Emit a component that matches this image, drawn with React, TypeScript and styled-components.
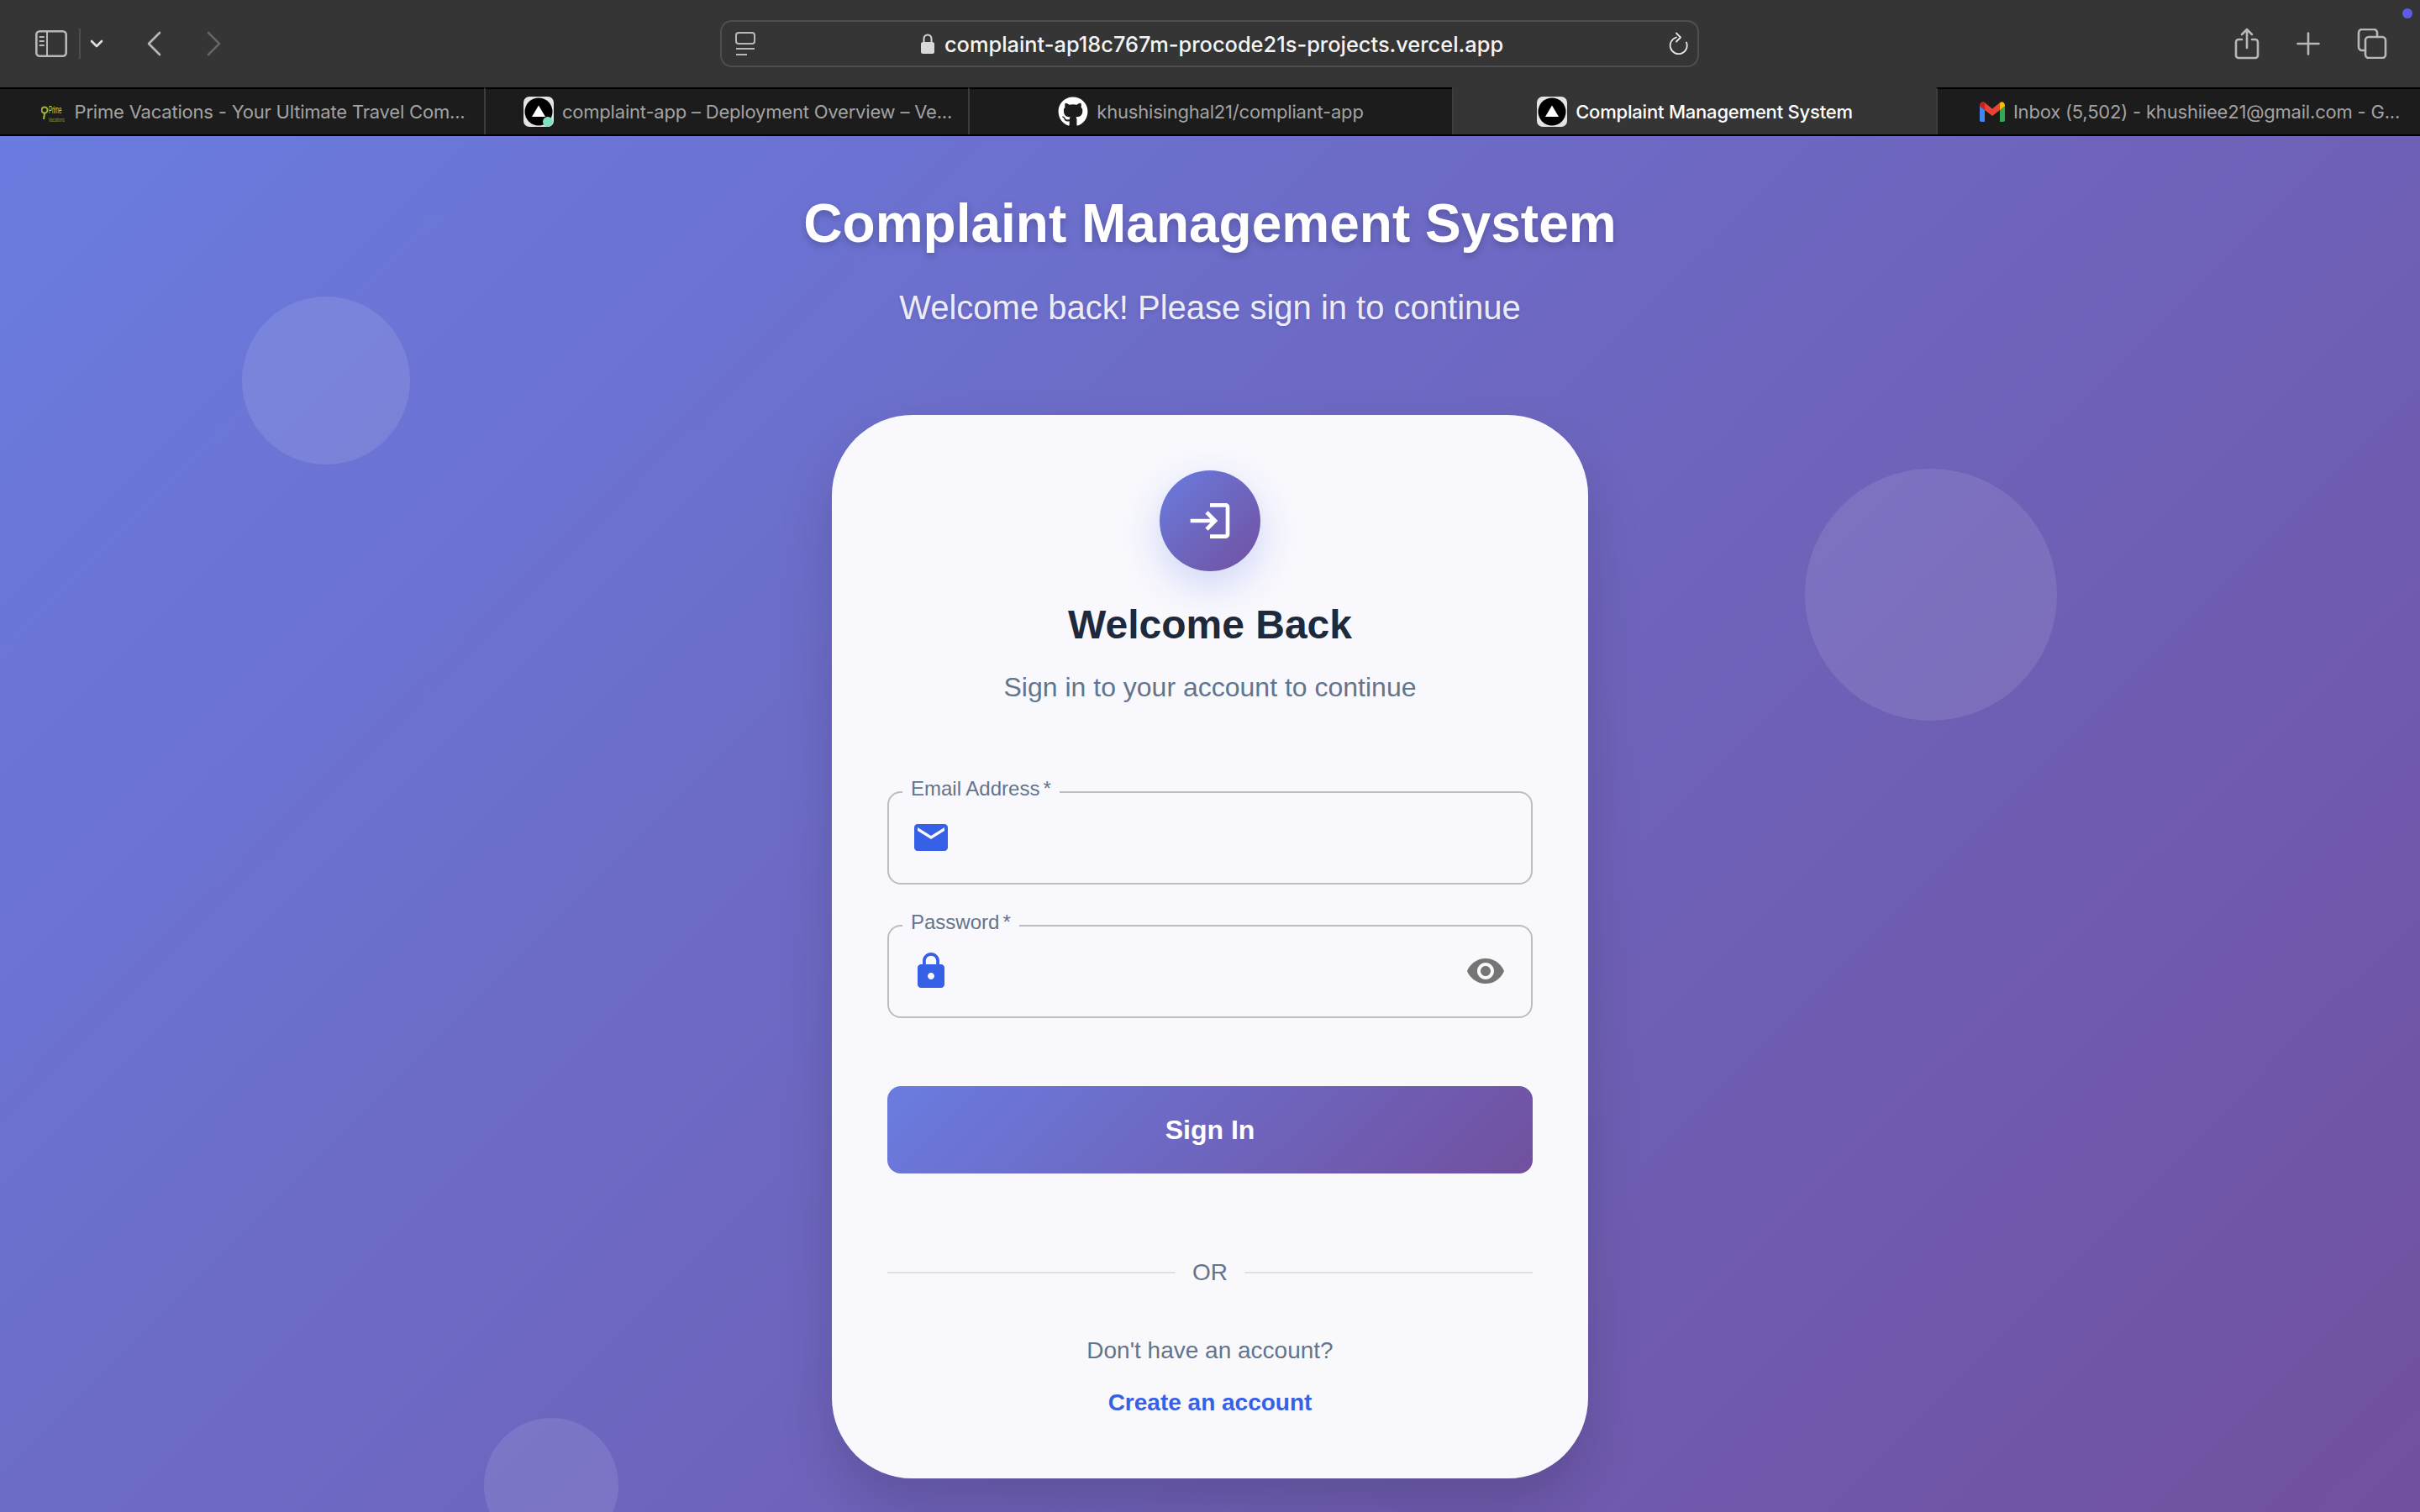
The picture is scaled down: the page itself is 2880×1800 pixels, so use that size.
import styled, { createGlobalStyle } from "styled-components";
import { FaGithub } from "react-icons/fa";

const brandGradient = "linear-gradient(135deg, #6a7ce0 0%, #71509f 100%)";

const Global = createGlobalStyle`
  html, body {
    margin: 0;
    height: 100%;
    overflow: hidden;
    background: #353535;
  }
  * { box-sizing: border-box; }
`;

const Window = styled.div`
  display: flex;
  flex-direction: column;
  height: 1800px;
  font-family: "Liberation Sans", Arial, sans-serif;
`;

/* browser chrome */
const Toolbar = styled.header`
  position: relative;
  display: grid;
  grid-template-columns: 857px 1165px 1fr;
  align-items: center;
  height: 104px;
  padding-top: 2px;
  background: #353535;
`;
const ToolGroup = styled.div`
  display: flex;
  align-items: center;
  height: 100%;
`;
const LeftTools = styled(ToolGroup)`
  padding-left: 42px;
  padding-bottom: 2px;
`;
const RightTools = styled(ToolGroup)`
  justify-content: flex-end;
  gap: 44px;
  padding-right: 39px;
  padding-bottom: 2px;
`;
const ToolIcon = styled.svg<{ $ml?: number; $stroke?: string; $weight?: number }>`
  display: block;
  flex: none;
  margin-left: ${({ $ml }) => $ml ?? 0}px;
  fill: none;
  stroke: ${({ $stroke }) => $stroke ?? "#b8b8b8"};
  stroke-width: ${({ $weight }) => $weight ?? 2.6};
  stroke-linecap: round;
  stroke-linejoin: round;
`;
const AddressBar = styled.div`
  display: flex;
  align-items: center;
  height: 56px;
  padding: 0 10px 0 16px;
  border: 2px solid #4f4f4f;
  border-radius: 14px;
  margin-top: -2px;
`;
const AddressCenter = styled.div`
  flex: 1;
  display: flex;
  align-items: center;
  justify-content: center;
  gap: 12px;
`;
const Url = styled.span`
  font-family: Inter, sans-serif;
  font-size: 25.4px;
  font-weight: 500;
  color: #f4f4f4;
  white-space: nowrap;
`;
const NoticeDot = styled.span`
  position: absolute;
  top: 10px;
  right: 9px;
  width: 12px;
  height: 12px;
  border-radius: 50%;
  background: #5e5ce6;
`;

const TabStrip = styled.nav`
  display: grid;
  grid-template-columns: repeat(5, 1fr);
  height: 58px;
  flex: none;
  background: #1c1c1c;
  border-bottom: 2px solid #000;
`;
const Tab = styled.div<{ $active?: boolean; $long?: boolean }>`
  min-width: 0;
  display: flex;
  align-items: center;
  justify-content: center;
  gap: 10px;
  padding-left: ${({ $long }) => ($long ? 26 : 0)}px;
  border-top: 2px solid ${({ $active }) => ($active ? "#353535" : "#000")};
  border-left: 2px solid #3c3c3c;
  background: ${({ $active }) => ($active ? "#353535" : "transparent")};
  color: ${({ $active }) => ($active ? "#fff" : "#a3a3a3")};
  font-family: Inter, sans-serif;
  font-size: 22px;
  letter-spacing: -0.2px;
  font-weight: ${({ $active }) => ($active ? 500 : 400)};
  white-space: nowrap;
  &:first-child {
    border-left: none;
  }
`;

/* page */
const Page = styled.main`
  position: relative;
  flex: 1;
  min-height: 0;
  overflow: hidden;
  display: flex;
  flex-direction: column;
  align-items: center;
  padding-top: 66px;
  background: ${brandGradient};
`;
const Bubble = styled.span<{ $size: number; $left: number; $top: number }>`
  position: absolute;
  left: ${({ $left }) => $left}px;
  top: ${({ $top }) => $top}px;
  width: ${({ $size }) => $size}px;
  height: ${({ $size }) => $size}px;
  border-radius: 50%;
  background: rgba(255, 255, 255, 0.1);
`;
const PageTitle = styled.h1`
  position: relative;
  margin: 0;
  font-size: 64px;
  font-weight: 700;
  line-height: 76px;
  color: #fff;
  text-shadow: 0 4px 8px rgba(0, 0, 0, 0.2);
`;
const PageSubtitle = styled.p`
  position: relative;
  margin: 37px 0 0;
  font-size: 40px;
  line-height: 50px;
  color: rgba(255, 255, 255, 0.9);
  text-shadow: 0 2px 4px rgba(0, 0, 0, 0.1);
`;

const Card = styled.section`
  position: relative;
  width: 900px;
  margin-top: 103px;
  padding: 66px 66px 70px;
  display: flex;
  flex-direction: column;
  align-items: center;
  border-radius: 96px;
  background: rgba(255, 255, 255, 0.96);
  box-shadow: 0 32px 64px rgba(0, 0, 0, 0.15);
`;
const AvatarCircle = styled.div`
  width: 120px;
  height: 120px;
  display: flex;
  align-items: center;
  justify-content: center;
  border-radius: 50%;
  background: ${brandGradient};
  box-shadow: 0 16px 50px rgba(102, 126, 234, 0.3);
  svg {
    width: 56px;
    height: 56px;
    fill: #fff;
  }
`;
const CardTitle = styled.h2`
  margin: 34px 0 0;
  font-size: 48px;
  font-weight: 700;
  line-height: 60px;
  color: #1e293b;
`;
const CardSubtitle = styled.p`
  margin: 24px 0 0;
  font-size: 32px;
  line-height: 40px;
  color: #64748b;
`;
const Form = styled.form`
  align-self: stretch;
  margin-top: 87px;
  display: flex;
  flex-direction: column;
  gap: 31px;
`;
const Field = styled.fieldset`
  height: 128px;
  margin: 0;
  padding: 0 30px 0 26px;
  border: 2px solid #bdbdc1;
  border-radius: 16px;
`;
const FieldLabel = styled.legend`
  margin-left: -10px;
  padding: 0 10px 8px;
  font-size: 24px;
  line-height: 28px;
  color: #64748b;
  span {
    margin-left: 4px;
  }
`;
const FieldBody = styled.div`
  display: flex;
  align-items: center;
  justify-content: space-between;
  height: 72px;
`;
const FieldIcon = styled.svg<{ $muted?: boolean }>`
  display: block;
  width: 48px;
  height: 48px;
  fill: ${({ $muted }) => ($muted ? "#757575" : "#3660e6")};
`;
const SubmitButton = styled.button`
  height: 104px;
  margin-top: 50px;
  border: none;
  border-radius: 16px;
  background: ${brandGradient};
  font-family: inherit;
  font-size: 32px;
  font-weight: 700;
  color: #fff;
`;
const Divider = styled.div`
  align-self: stretch;
  margin-top: 98px;
  display: flex;
  align-items: center;
  gap: 20px;
  font-size: 28px;
  line-height: 40px;
  color: #64748b;
  &::before,
  &::after {
    content: "";
    flex: 1;
    height: 2px;
    background: #e0e0e4;
  }
`;
const FootText = styled.p`
  margin: 53px 0 0;
  font-size: 28px;
  line-height: 40px;
  color: #64748b;
`;
const FootLink = styled.a`
  margin-top: 22px;
  font-size: 28px;
  font-weight: 700;
  line-height: 40px;
  color: #3660e6;
`;

/* favicons */
const VercelIcon = ({ badge }: { badge?: boolean }) => (
  <svg width="36" height="36" viewBox="0 0 36 36">
    <rect width="36" height="36" rx="7" fill="#e4e4e4" />
    <circle cx="18" cy="18" r="16.500" fill="#000" />
    <path d="M18 10.500 26 24H10Z" fill="#fff" />
    {badge && <circle cx="29" cy="30" r="6" fill="#7fe0c4" />}
  </svg>
);
const PrimeIcon = () => (
  <svg width="30" height="30" viewBox="0 0 30 30">
    <circle cx="4" cy="13" r="3.500" fill="none" stroke="#a5b53a" strokeWidth="2" />
    <path d="M4 17 3 24" stroke="#a5b53a" strokeWidth="2" />
    <g transform="scale(0.5 1)">
      <text x="18" y="17.500" fontFamily="Liberation Sans" fontSize="12" fill="#e2c934">
        Prime
      </text>
    </g>
    <g transform="scale(0.58 1)">
      <text x="15" y="27" fontFamily="Liberation Sans" fontSize="8" fill="#7e9d3a">
        Vacations
      </text>
    </g>
  </svg>
);
const GmailIcon = () => (
  <svg width="30" height="24" viewBox="0 0 30 24">
    <path d="M0 5v17c0 1 .8 2 2 2h4V10Z" fill="#4285f4" />
    <path d="M24 10v14h4c1.200 0 2-1 2-2V5Z" fill="#34a853" />
    <path d="M0 5c0-4 4.500-6 7-3l8 6.500L23 2c2.500-3 7-1 7 3l-6 5-9 7-9-7Z" fill="#ea4335" />
    <path d="M24 10V2c2.500-3 6-1 6 3Z" fill="#fbbc04" />
    <path d="M0 5c0-4 3.500-6 6-3v8Z" fill="#c5221f" />
  </svg>
);

export default function App() {
  return (
    <Window>
      <Global />
      <Toolbar>
        <LeftTools>
          <ToolIcon width="38" height="32" viewBox="0 0 38 32">
            <rect x="1.300" y="1.300" width="35.400" height="29.400" rx="4" />
            <path d="M14 1.500v29M5.500 8h4.500M5.500 13h4.500M5.500 18h4.500" strokeWidth="2" />
          </ToolIcon>
          <ToolIcon $ml={14} $stroke="#4d4d4d" $weight={2} width="2" height="36" viewBox="0 0 2 36">
            <path d="M1 0v36" />
          </ToolIcon>
          <ToolIcon $ml={11} $stroke="#e0e0e0" width="16" height="10" viewBox="0 0 16 10">
            <path d="M2 2l6 6 6-6" />
          </ToolIcon>
          <ToolIcon $ml={51} width="18" height="30" viewBox="0 0 18 30">
            <path d="M16 2 3 15l13 13" />
          </ToolIcon>
          <ToolIcon $ml={54} $stroke="#666" width="18" height="30" viewBox="0 0 18 30">
            <path d="M2 2l13 13L2 28" />
          </ToolIcon>
        </LeftTools>
        <AddressBar>
          <ToolIcon $weight={2} width="24" height="28" viewBox="0 0 24 28">
            <rect x="1" y="1" width="22" height="13" rx="3" />
            <path d="M1 20h22M1 27h13" strokeLinecap="butt" />
          </ToolIcon>
          <AddressCenter>
            <svg width="16" height="24" viewBox="0 0 16 24">
              <path d="M3.500 10V6a4.500 4.500 0 0 1 9 0v4" fill="none" stroke="#d8d8d8" strokeWidth="2" />
              <rect y="10" width="16" height="14" rx="2.500" fill="#d8d8d8" />
            </svg>
            <Url>complaint-ap18c767m-procode21s-projects.vercel.app</Url>
          </AddressCenter>
          <ToolIcon $stroke="#e8e8e8" $weight={1.8} width="24" height="28" viewBox="0 0 24 28">
            <path d="M9 6.500a10 10 0 1 0 12 6" />
            <path d="M9 1.500l5 5-5 5" />
          </ToolIcon>
        </AddressBar>
        <RightTools>
          <ToolIcon width="30" height="38" viewBox="0 0 30 38">
            <path d="M9 14H5a3 3 0 0 0-3 3v16a3 3 0 0 0 3 3h20a3 3 0 0 0 3-3V17a3 3 0 0 0-3-3h-4M15 24V2M9 8l6-6 6 6" />
          </ToolIcon>
          <ToolIcon width="28" height="28" viewBox="0 0 28 28">
            <path d="M14 1.500v25M1.500 14h25" />
          </ToolIcon>
          <ToolIcon width="36" height="36" viewBox="0 0 36 36">
            <rect x="10" y="10" width="24" height="25" rx="4" />
            <path d="M10 26H6a4 4 0 0 1-4-4V5a4 4 0 0 1 4-4h14a4 4 0 0 1 4 4v5" />
          </ToolIcon>
        </RightTools>
        <NoticeDot />
      </Toolbar>
      <TabStrip>
        <Tab $long>
          <PrimeIcon />
          Prime Vacations - Your Ultimate Travel Com...
        </Tab>
        <Tab $long>
          <VercelIcon badge />
          complaint-app – Deployment Overview – Ve...
        </Tab>
        <Tab>
          <FaGithub size={36} color="#fff" />
          khushisinghal21/compliant-app
        </Tab>
        <Tab $active>
          <VercelIcon />
          Complaint Management System
        </Tab>
        <Tab $long>
          <GmailIcon />
          Inbox (5,502) - khushiiee21@gmail.com - G...
        </Tab>
      </TabStrip>
      <Page>
        <Bubble $size={200} $left={288} $top={191} />
        <Bubble $size={300} $left={2148} $top={396} />
        <Bubble $size={160} $left={576} $top={1526} />
        <PageTitle>Complaint Management System</PageTitle>
        <PageSubtitle>Welcome back! Please sign in to continue</PageSubtitle>
        <Card>
          <AvatarCircle>
            <svg viewBox="0 0 24 24">
              <path d="M11 7 9.600 8.400l2.600 2.600H2v2h10.200l-2.600 2.600L11 17l5-5-5-5zm9 12h-8v2h8c1.100 0 2-.9 2-2V5c0-1.100-.9-2-2-2h-8v2h8v14z" />
            </svg>
          </AvatarCircle>
          <CardTitle>Welcome Back</CardTitle>
          <CardSubtitle>Sign in to your account to continue</CardSubtitle>
          <Form>
            <Field>
              <FieldLabel>
                Email Address<span>*</span>
              </FieldLabel>
              <FieldBody>
                <FieldIcon viewBox="0 0 24 24">
                  <path d="M20 4H4c-1.100 0-1.990.9-1.990 2L2 18c0 1.100.9 2 2 2h16c1.100 0 2-.9 2-2V6c0-1.100-.9-2-2-2zm0 4l-8 5-8-5V6l8 5 8-5v2z" />
                </FieldIcon>
              </FieldBody>
            </Field>
            <Field>
              <FieldLabel>
                Password<span>*</span>
              </FieldLabel>
              <FieldBody>
                <FieldIcon viewBox="0 0 24 24">
                  <path d="M18 8h-1V6c0-2.760-2.240-5-5-5S7 3.240 7 6v2H6c-1.100 0-2 .9-2 2v10c0 1.100.9 2 2 2h12c1.100 0 2-.9 2-2V10c0-1.100-.9-2-2-2zm-6 9c-1.100 0-2-.9-2-2s.9-2 2-2 2 .9 2 2-.9 2-2 2zm3.100-9H8.900V6c0-1.710 1.390-3.100 3.100-3.100 1.710 0 3.100 1.390 3.100 3.100v2z" />
                </FieldIcon>
                <FieldIcon $muted viewBox="0 0 24 24">
                  <path d="M12 4.500C7 4.500 2.730 7.610 1 12c1.730 4.390 6 7.500 11 7.500s9.270-3.110 11-7.500c-1.730-4.390-6-7.500-11-7.500zM12 17c-2.760 0-5-2.240-5-5s2.240-5 5-5 5 2.240 5 5-2.240 5-5 5zm0-8c-1.660 0-3 1.340-3 3s1.340 3 3 3 3-1.340 3-3-1.340-3-3-3z" />
                </FieldIcon>
              </FieldBody>
            </Field>
            <SubmitButton type="button">Sign In</SubmitButton>
          </Form>
          <Divider>OR</Divider>
          <FootText>Don't have an account?</FootText>
          <FootLink>Create an account</FootLink>
        </Card>
      </Page>
    </Window>
  );
}
